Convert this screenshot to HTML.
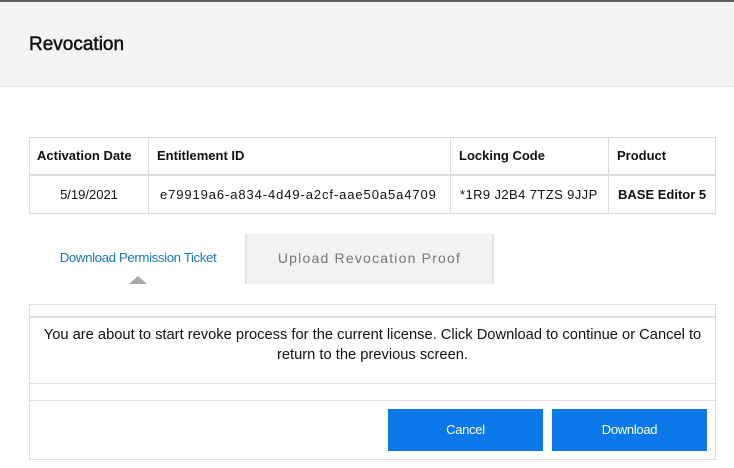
<!DOCTYPE html>
<html><head><meta charset="utf-8"><style>
*{box-sizing:border-box;margin:0;padding:0}
body{width:734px;height:468px;background:#fff;font-family:"Liberation Sans",sans-serif;color:#111;position:relative;overflow:hidden}
.top{position:absolute;left:0;top:0;width:734px;height:2px;background:#5e5e5e}
.hdr{position:absolute;left:0;top:2px;width:734px;height:85px;background:#f4f4f4;border-bottom:1px solid #e2e2e2}
.hdr h1{position:absolute;left:29px;top:32px;font-size:19px;font-weight:normal;-webkit-text-stroke:0.5px #111}
table{position:absolute;left:29px;top:137px;width:687px;border-collapse:collapse;font-size:13px}
td,th{border:1px solid #dcdcdc;padding:0 8px}
th{height:37px;text-align:left;font-weight:bold;border-bottom:2px solid #dcdcdc}
td{height:39px}
.tab1{position:absolute;left:29px;top:250px;width:218px;text-align:center;font-size:13.3px;color:#1a78b4;letter-spacing:-0.4px}
.tri{position:absolute;left:129px;top:276px;width:0;height:0;border-left:9px solid transparent;border-right:9px solid transparent;border-bottom:8px solid #a8a8a8}
.tab2{position:absolute;left:245px;top:234px;width:249px;height:50px;background:#f2f2f3;border-left:2px solid #e3e3e3;border-right:2px solid #e3e3e3;text-align:center;line-height:48px;font-size:14px;color:#777;letter-spacing:1.2px}
.panel{position:absolute;left:29px;top:304px;width:687px;height:156px;border:1px solid #dedede}
.l{position:absolute;left:0;width:100%;background:#dedede;height:1px}
.msg{position:absolute;left:0;top:20px;width:100%;text-align:center;font-size:14.7px;line-height:20px;padding:0;white-space:nowrap}
.btn{position:absolute;top:104px;width:155px;height:42px;background:#0a78e8;color:#fff;font-size:13px;text-align:center;line-height:42px;letter-spacing:-0.3px}
</style></head><body>
<div class="top"></div>
<div class="hdr"><h1>Revocation</h1></div>
<table>
<tr><th style="width:119px;padding-left:7px">Activation Date</th><th style="width:302px">Entitlement ID</th><th style="width:158px">Locking Code</th><th>Product</th></tr>
<tr><td style="text-align:center">5/19/2021</td><td style="padding-left:11px;letter-spacing:0.9px">e79919a6-a834-4d49-a2cf-aae50a5a4709</td><td style="padding-left:9px;letter-spacing:0.4px">*1R9 J2B4 7TZS 9JJP</td><td style="font-weight:bold;padding-left:9px">BASE Editor 5</td></tr>
</table>
<div class="tab1">Download Permission Ticket</div>
<div class="tri"></div>
<div class="tab2">Upload Revocation Proof</div>
<div class="panel">
<div class="l" style="top:11px;height:2px"></div>
<div class="msg">You are about to start revoke process for the current license. Click Download to continue or Cancel to<br>return to the previous screen.</div>
<div class="l" style="top:78px"></div>
<div class="l" style="top:95px"></div>
<div class="btn" style="left:358px">Cancel</div>
<div class="btn" style="left:522px">Download</div>
</div>
</body></html>
